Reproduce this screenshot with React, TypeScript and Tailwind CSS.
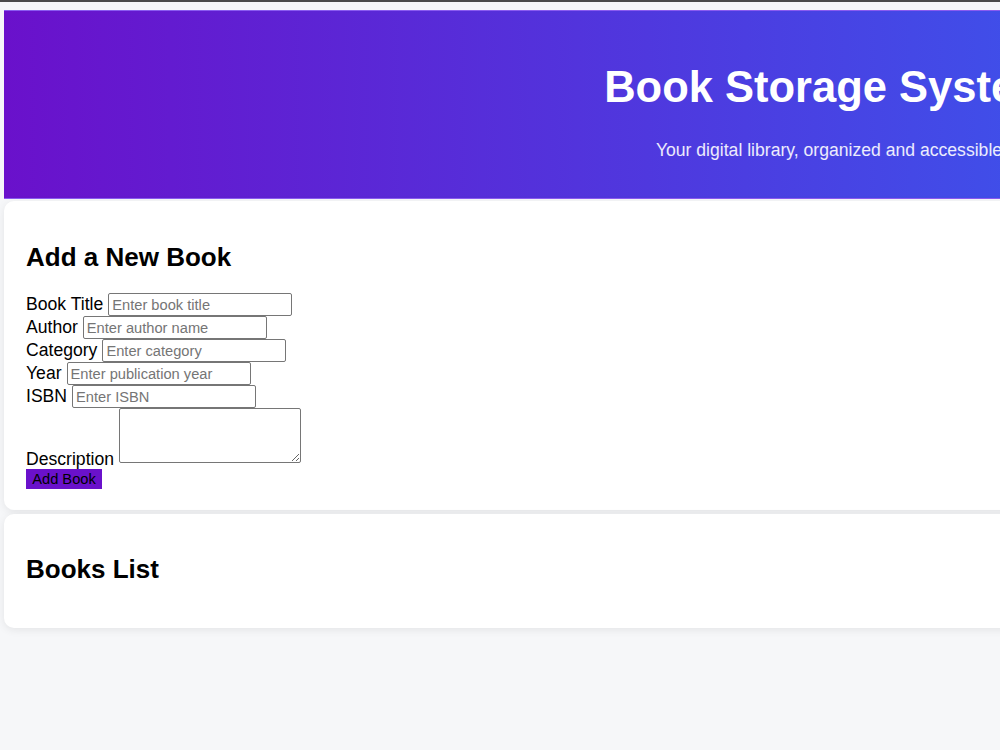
const fields = [
  { label: "Book Title", placeholder: "Enter book title" },
  { label: "Author", placeholder: "Enter author name" },
  { label: "Category", placeholder: "Enter category" },
  { label: "Year", placeholder: "Enter publication year" },
  { label: "ISBN", placeholder: "Enter ISBN" },
];

export default function App() {
  return (
    <div className="h-screen w-full overflow-hidden border-t-2 border-[#4a4a4a] bg-[#f6f7f9] font-['Liberation_Sans',Arial,sans-serif] text-black">
      <div className="ml-[4px] mt-[8px] w-[1650px]">
        {/* Header */}
        <header className="flex h-[189px] flex-col items-center border-y border-[#8a5bf0] bg-[linear-gradient(to_right,#6a11cb,#2575fc)] text-center text-white">
          <h1 className="mt-[52px] text-[43.5px] font-bold leading-[48px]">Book Storage System</h1>
          <p className="mt-[29px] text-[17.6px] leading-[20px] text-white/90">
            Your digital library, organized and accessible
          </p>
        </header>

        {/* Add form */}
        <section className="mt-[2px] rounded-[10px] bg-white px-[22px] pb-[19px] pt-[41px] shadow-[0_2px_8px_rgba(0,0,0,0.08)]">
          <h2 className="text-[26px] font-bold leading-[30px]">Add a New Book</h2>
          <form className="mt-[21px] text-[17.6px]" onSubmit={(e) => e.preventDefault()}>
            {fields.map((f) => (
              <div key={f.label} className="flex h-[23px] items-center gap-[5px]">
                <label>{f.label}</label>
                <input
                  type="text"
                  placeholder={f.placeholder}
                  className="h-[23px] w-[184px] rounded-[2px] border border-[#767676] bg-white px-[3px] text-[14.67px] placeholder:text-[#757575]"
                />
              </div>
            ))}
            <div className="flex items-end gap-[5px]">
              <label className="mb-[-6px] leading-[20px]">Description</label>
              <textarea className="h-[55px] w-[182px] resize-y rounded-[2px] border border-[#767676] bg-white text-[14.67px]" />
            </div>
            <button
              type="submit"
              className="mt-[6px] h-[20px] w-[76px] bg-[#6a11cb] text-[14.67px] leading-[20px] text-black"
            >
              Add Book
            </button>
          </form>
        </section>

        {/* Books list */}
        <section className="mt-[4px] h-[114px] rounded-[10px] bg-white px-[22px] pt-[40px] shadow-[0_2px_8px_rgba(0,0,0,0.08)]">
          <h2 className="text-[26px] font-bold leading-[30px]">Books List</h2>
        </section>
      </div>
    </div>
  );
}
